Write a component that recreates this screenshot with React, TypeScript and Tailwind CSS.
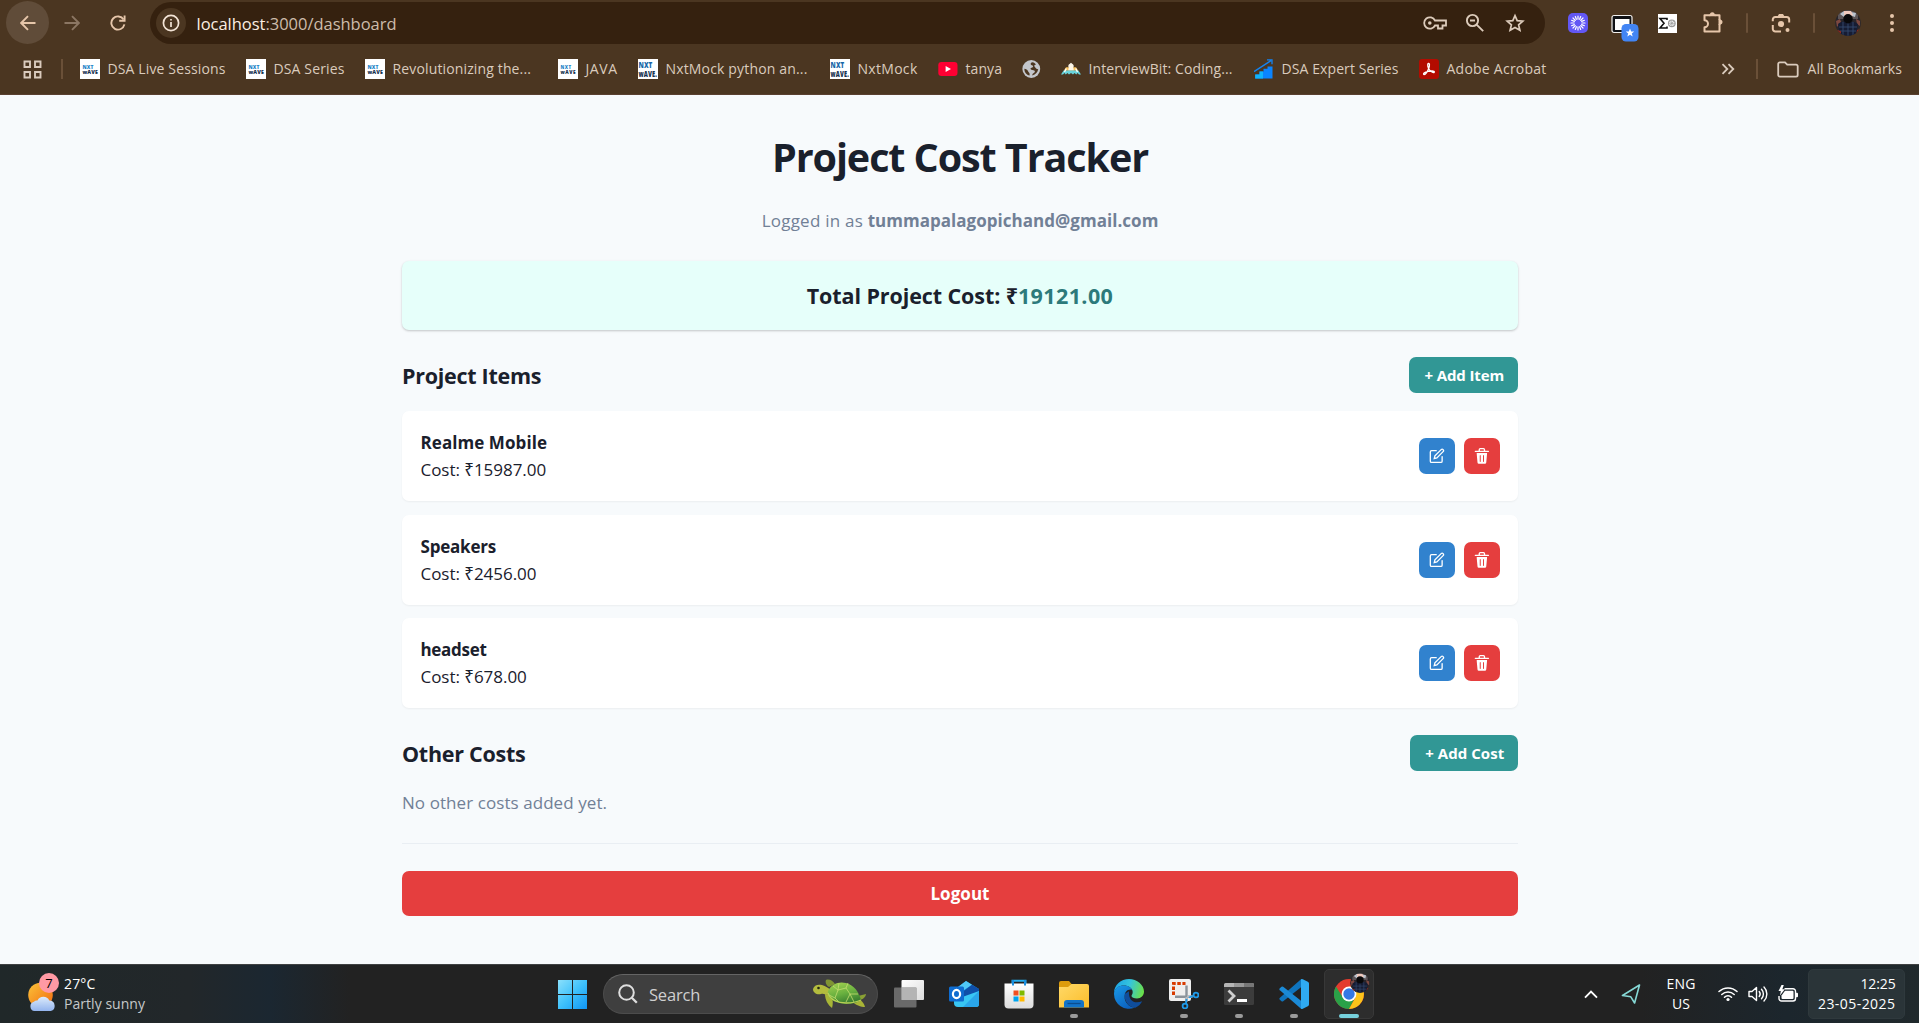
import type { ReactNode } from "react";

function BackIcon({ className }: { className: string }) {
  return (
    <svg viewBox="0 0 16 16" className={className} fill="none" stroke="currentColor" strokeWidth="1.9">
      <path d="M15.5 8H1.6M8 1.2 1.2 8 8 14.8" />
    </svg>
  );
}

function ReloadIcon() {
  return (
    <svg viewBox="0 0 16 16" className="h-4 w-4 text-[#e6c6aa]" fill="none" stroke="currentColor" strokeWidth="1.9">
      <path d="M13.6 4.6A6.6 6.6 0 1 0 14.4 9.4" />
      <path d="M14.6 0.6V5.8H9.2" />
    </svg>
  );
}

function NxtWaveIcon({ large }: { large?: boolean }) {
  return (
    <svg viewBox="0 0 20 20" className="h-5 w-5 shrink-0" fontFamily="Open Sans, sans-serif" fontWeight="800">
      <rect width="20" height="20" fill="#fff" />
      {large ? (
        <>
          <text x="0.5" y="9" fontSize="8.5" textLength="14" lengthAdjust="spacingAndGlyphs" fill="#1767a8">NXT</text>
          <text x="0.5" y="17.600" fontSize="8.5" textLength="18.500" lengthAdjust="spacingAndGlyphs" fill="#17324f">wAVE.</text>
        </>
      ) : (
        <>
          <text x="2.5" y="9.6" fontSize="5.6" textLength="11" lengthAdjust="spacingAndGlyphs" fill="#1e83c8">NXT</text>
          <text x="2.5" y="15.2" fontSize="5.6" textLength="15.5" lengthAdjust="spacingAndGlyphs" fill="#17324f">wAVE</text>
        </>
      )}
    </svg>
  );
}

function YoutubeIcon() {
  return (
    <svg viewBox="0 0 20 20" className="h-5 w-5 shrink-0">
      <rect x="0.3" y="3" width="19.2" height="14" rx="3.2" fill="#ff0033" />
      <path d="M7.6 6.9v6.2L13 10z" fill="#fff" />
    </svg>
  );
}

function GlobeIcon() {
  return (
    <svg viewBox="0 0 20 20" className="h-5 w-5 shrink-0">
      <circle cx="9.300" cy="10" r="8.900" fill="#c3c6cb" />
      <path d="M10.500 3.200c-1.500.300-2.200 1.300-1.700 2.300.500.900 1.700.700 2.200 1.500.400.800-.300 1.500-1.400 1.700-1 .200-1.300.800-.900 1.500.700 1 2.400.500 3.600 1.300 1.100.800.600 2-.500 2.600-1.200.600-1.500 1.300-1.500 2.400 3.300-.700 5.600-3.300 5.900-6.400-1.200.200-2-.200-2.500-1-.400-.900-1.200-1.200-1.400-2-.200-1 .700-1.500 1.700-1.700-.900-1.100-2-2.100-3.500-2.200z" fill="#4b3621" />
      <path d="M2.400 9.800c1.500.200 3.100.900 3.500 2.100.500 1.300 1.600 1.500 1.700 2.900v1.800C4.600 15.900 2.200 13.200 2.400 9.800z" fill="#4b3621" />
    </svg>
  );
}

function InterviewBitIcon() {
  return (
    <svg viewBox="0 0 20 20" className="h-5 w-5 shrink-0">
      <path d="M7.400 6 10 3.800 12.600 6v2H7.400z" fill="#f7f3ea" />
      <path d="M5 8.300h10l2.300 3.400H2.700z" fill="#f6c15c" />
      <path d="M8.200 5.600h3.600l1 6H7.200z" fill="#fdf6e6" />
      <path d="M2.600 11.500h14.800L20 15.500h-2l-1.400-1.500-1.400 1.500-1.600-1.500-1.600 1.500-2-1.500-2 1.500-1.600-1.500-1.600 1.500L3.400 14 2 15.500H0z" fill="#69d4dc" />
      <path d="M5.300 9.500 3.500 13M14.700 9.500l1.800 3.500" stroke="#fff" strokeWidth="1.4" />
    </svg>
  );
}

function StairsIcon() {
  return (
    <svg viewBox="0 0 20 20" className="h-5 w-5 shrink-0">
      <path d="M1.200 19.500V15.500H5.500V12.500H9.500V9.700H13.500V7.600H18.500V19.500Z" fill="#0a84ff" />
      <path d="M1.200 19.500V15.500H5.500V12.500H9V19.500Z" fill="#10b4fb" />
      <path d="M0 12.600 17 1.600M13 .8h5v4.400" stroke="#1483f0" strokeWidth="1.300" fill="none" />
    </svg>
  );
}

function AcrobatIcon() {
  return (
    <svg viewBox="0 0 20 20" className="h-5 w-5 shrink-0">
      <rect width="20" height="20" rx="3" fill="#b30b00" />
      <path
        d="M9.300 4.500c1.500-.3 1.400 2.300.5 4.800-1 2.800-3.300 6.400-4.700 6.200-1.500-.3.200-2.400 3.900-3.100 3-.6 6.300-.6 6.400.5.100 1.300-2.700.8-4.800-1.700C8.800 9 8.100 4.800 9.300 4.500z"
        fill="none"
        stroke="#fff"
        strokeWidth="1.300"
      />
    </svg>
  );
}

const bookmarks: { label: string; icon: ReactNode; slot: string; tracking: string }[] = [
  { label: "DSA Live Sessions", icon: <NxtWaveIcon />, slot: "w-[166px]", tracking: "tracking-[0.13px]" },
  { label: "DSA Series", icon: <NxtWaveIcon />, slot: "w-[119px]", tracking: "tracking-[0.13px]" },
  { label: "Revolutionizing the...", icon: <NxtWaveIcon />, slot: "w-[193px]", tracking: "tracking-[0.14px]" },
  { label: "JAVA", icon: <NxtWaveIcon />, slot: "w-[80px]", tracking: "tracking-[0.6px]" },
  { label: "NxtMock python an...", icon: <NxtWaveIcon large />, slot: "w-[192px]", tracking: "tracking-[0.16px]" },
  { label: "NxtMock", icon: <NxtWaveIcon large />, slot: "w-[108px]", tracking: "tracking-[0.3px]" },
  { label: "tanya", icon: <YoutubeIcon />, slot: "w-[84px]", tracking: "tracking-[0.07px]" },
  { label: "", icon: <GlobeIcon />, slot: "w-[39px]", tracking: "tracking-normal" },
  { label: "InterviewBit: Coding...", icon: <InterviewBitIcon />, slot: "w-[193px]", tracking: "tracking-[0.1px]" },
  { label: "DSA Expert Series", icon: <StairsIcon />, slot: "w-[165px]", tracking: "tracking-[0.09px]" },
  { label: "Adobe Acrobat", icon: <AcrobatIcon />, slot: "w-[140px]", tracking: "tracking-[0.24px]" },
];

function Avatar({ className }: { className: string }) {
  return (
    <svg viewBox="0 0 26 26" className={className}>
      <defs>
        <clipPath id="avatar-clip">
          <circle cx="13" cy="13" r="12.800" />
        </clipPath>
      </defs>
      <g clipPath="url(#avatar-clip)">
        <rect width="26" height="26" fill="#29262b" />
        <path d="M3 0h20v9H3z" fill="#5c5558" />
        <path d="M5 4l4-3 3 2-3 4zM16 2l5 1-1 4-3-1z" fill="#b9c2cc" />
        <path d="M9 1h7l2 4-3 2H9z" fill="#efc9bd" />
        <path d="M1 11l4-2 1 3-4 5zM21 9l4 2v5l-3-2z" fill="#7d4840" />
        <path d="M3 14c3-3 6-2.500 10-2.500S21 12 23 14l-2 12H5z" fill="#161c33" />
        <path d="M4 17h18M5 21h16M8 12v14M13 13v13M18 12v14" stroke="#34496d" strokeWidth="0.900" />
        <circle cx="13" cy="8.800" r="4.700" fill="#08080a" />
        <path d="M2 20l4 1v5H3zM22 20l3-1-2 6h-2z" fill="#8a2a1f" />
      </g>
    </svg>
  );
}

function Toolbar() {
  return (
    <div className="flex h-[46px] items-center text-[#e6c6aa]">
      <div className="mb-px ml-[6px] flex h-[43px] w-[43px] items-center justify-center rounded-full bg-[#604c39]">
        <BackIcon className="h-4 w-4" />
      </div>
      <div className="flex w-[46px] justify-center text-[#8b7663]">
        <BackIcon className="h-4 w-4 rotate-180" />
      </div>
      <div className="flex w-[45px] justify-center">
        <ReloadIcon />
      </div>
      <div className="ml-[10px] flex h-[42px] w-[1395px] items-center rounded-full bg-[#35210f] pr-[10px] pl-[6px] text-[#dccbbb]">
        <div className="flex h-[30px] w-[30px] items-center justify-center rounded-full bg-[#4b3621]">
          <svg viewBox="0 0 18 18" className="h-[18px] w-[18px] text-[#f3e4d6]" fill="none" stroke="currentColor" strokeWidth="1.700">
            <circle cx="9" cy="9" r="7.600" />
            <path d="M9 8v5M9 4.900v1.700" />
          </svg>
        </div>
        <div className="ml-[10.500px] pt-[3px] text-[16.5px] tracking-[-0.02px] whitespace-nowrap text-[#cdbcab]">
          <span className="text-[#fbeee2]">localhost</span>:3000/dashboard
        </div>
        <div className="ml-auto flex">
          <div className="flex w-10 items-center justify-center">
            <svg viewBox="0 0 24 14" className="h-[14px] w-6" fill="none" stroke="currentColor" strokeWidth="1.800">
              <path d="M12 4.500A5.700 5.700 0 1 0 12 9.500h3v3h4.500v-3H23v-5z" />
              <circle cx="6.800" cy="7" r="1.800" fill="currentColor" stroke="none" />
            </svg>
          </div>
          <div className="flex w-10 items-center justify-center">
            <svg viewBox="0 0 20 20" className="h-5 w-5" fill="none" stroke="currentColor" strokeWidth="1.900">
              <circle cx="7.500" cy="7.500" r="5.600" />
              <path d="M11.600 11.600l6.600 6.600M5 7.500h5" />
            </svg>
          </div>
          <div className="flex w-10 items-center justify-center">
            <svg viewBox="0 0 20 20" className="h-5 w-5" fill="none" stroke="currentColor" strokeWidth="1.700">
              <path d="M10 2.600l2.200 5.100 5.600.5-4.200 3.700 1.300 5.400-4.900-2.900-4.900 2.900 1.300-5.400L2.200 8.200l5.600-.5z" />
            </svg>
          </div>
        </div>
      </div>
      <div className="ml-[11px] flex w-[43px] justify-center">
        <svg viewBox="0 0 20 20" className="h-5 w-5">
          <rect width="20" height="20" rx="5" fill="#6257f5" />
          <g stroke="#fff" strokeWidth="1.200" strokeLinecap="round">
            <path d="M10 3v3.200M10 13.800V17M3 10h3.200M13.800 10H17M5 5l2.300 2.300M12.700 12.700L15 15M5 15l2.300-2.300M12.700 7.300L15 5M7.300 3.600l1.100 2.700M11.600 13.700l1.100 2.700M3.600 12.700l2.700-1.100M13.700 8.400l2.700-1.100M3.600 7.300l2.700 1.100M13.700 11.600l2.700 1.100M7.300 16.400l1.100-2.700M11.600 6.300l1.100-2.700" />
          </g>
        </svg>
      </div>
      <div className="flex w-[51px] justify-center">
        <svg viewBox="0 0 30 30" className="mt-[9px] h-[30px] w-[30px]">
          <rect x="2" y="2.500" width="20" height="17" rx="2" fill="#101216" stroke="#f2f0ee" strokeWidth="1.200" />
          <rect x="5" y="6" width="14.500" height="11" fill="#fff" />
          <rect x="11.500" y="11" width="17" height="17.500" rx="4.500" fill="#4285f4" />
          <path d="M20 15.500l1.200 3h3l-2.400 1.900.9 3.100-2.700-1.800-2.700 1.800.9-3.100-2.400-1.900h3z" fill="#fff" />
        </svg>
      </div>
      <div className="flex w-[35px] justify-center">
        <svg viewBox="0 0 19 19" className="h-[19px] w-[19px]">
          <rect width="19" height="19" fill="#fff" />
          <path d="M9 6V4.500H2L6 9.300 2 14h7v-1.500" fill="none" stroke="#111" strokeWidth="1.600" />
          <circle cx="13.800" cy="9.300" r="3.300" fill="none" stroke="#9a9a9a" strokeWidth="1.200" />
          <path d="M13.800 6v6.600M10.500 9.300h6.600M11.500 7l4.600 4.600M11.500 11.600L16.100 7" stroke="#9a9a9a" strokeWidth="0.700" />
        </svg>
      </div>
      <div className="ml-[5px] flex w-[46px] justify-center">
        <svg viewBox="0 0 24 24" className="mb-0.5 h-6 w-6" fill="none" stroke="currentColor" strokeWidth="2">
          <path d="M4.500 5.200H9.200M13.800 5.200H18.500V9.800M18.500 14.200V21.500H3.500V17.200A3.400 3.400 0 0 0 3.500 10.200V5.200H5" strokeLinejoin="round" />
          <path d="M8.800 5.200a2.500 3 0 0 1 5 0zM18.500 9.600a3 2.500 0 0 1 0 5z" fill="currentColor" stroke="none" />
          <path d="M8.500 5.200h6M18.500 9v6" />
        </svg>
      </div>
      <div className="flex w-[21px] justify-center">
        <div className="h-5 w-[2px] rounded bg-[#6a5038]" />
      </div>
      <div className="flex w-[47px] justify-center">
        <svg viewBox="0 0 20 20" className="h-5 w-5" fill="none" stroke="currentColor" strokeWidth="2">
          <path d="M1.800 8.300V6.500a2.500 2.500 0 0 1 2.500-2.500h11.400a2.500 2.500 0 0 1 2.500 2.500v3M1.800 12v4a2.500 2.500 0 0 0 2.500 2.500H10" />
          <path d="M6.500 3.500L8 1h4l1.500 2.500z" fill="currentColor" stroke="none" />
          <circle cx="10" cy="11" r="3.100" fill="currentColor" stroke="none" />
          <circle cx="16.500" cy="17" r="2" fill="currentColor" stroke="none" />
        </svg>
      </div>
      <div className="flex w-5 justify-center">
        <div className="h-5 w-[2px] rounded bg-[#6a5038]" />
      </div>
      <div className="flex w-[47px] justify-center">
        <Avatar className="h-[26px] w-[26px]" />
      </div>
      <div className="flex w-[42px] flex-col items-center gap-[3.5px]">
        <div className="h-[3.5px] w-[3.5px] rounded-full bg-current" />
        <div className="h-[3.5px] w-[3.5px] rounded-full bg-current" />
        <div className="h-[3.5px] w-[3.5px] rounded-full bg-current" />
      </div>
    </div>
  );
}

function BookmarksBar() {
  return (
    <div className="flex h-[46px] items-center text-[14px] whitespace-nowrap text-[#dacbbd]">
      <svg viewBox="0 0 19 19" className="ml-[22.500px] h-[19px] w-[19px]" fill="none" stroke="currentColor" strokeWidth="1.900">
        <path d="M1.500 1.500h5.500v5.500H1.500zM12 1.500h5.500v5.500H12zM1.500 12h5.500v5.500H1.500zM12 12h5.500v5.500H12z" />
      </svg>
      <div className="ml-[19px] h-5 w-[2px] bg-[#6a5038]" />
      <div className="ml-[17.500px] flex">
        {bookmarks.map((b, i) => (
          <div key={i} className={`flex items-center gap-[7.500px] ${b.slot} ${b.tracking}`}>
            {b.icon}
            {b.label && <span className="leading-5">{b.label}</span>}
          </div>
        ))}
      </div>
      <svg viewBox="0 0 14 12" className="ml-auto h-3 w-[14px]" fill="none" stroke="currentColor" strokeWidth="1.800">
        <path d="M1.500 1.200L6.300 6l-4.800 4.800M7.500 1.200L12.300 6l-4.800 4.800" />
      </svg>
      <div className="ml-[21px] h-5 w-[2px] bg-[#6a5038]" />
      <svg viewBox="0 0 22 17" className="ml-[19px] h-[17px] w-[22px]" fill="none" stroke="currentColor" strokeWidth="1.800">
        <path d="M1.200 3A1.600 1.600 0 0 1 2.800 1.400H8l2.200 2.300h8.900A1.600 1.600 0 0 1 20.700 5.300V14a1.600 1.600 0 0 1-1.600 1.600H2.800A1.600 1.600 0 0 1 1.200 14z" />
      </svg>
      <span className="mr-[17px] ml-[8.500px] leading-5 tracking-[0.09px]">All Bookmarks</span>
    </div>
  );
}

function EditIcon() {
  return (
    <svg viewBox="0 0 24 24" className="h-[15.75px] w-[15.75px]" fill="none" stroke="currentColor" strokeWidth="2" strokeLinecap="round">
      <path d="M11 4H4a2 2 0 00-2 2v14a2 2 0 002 2h14a2 2 0 002-2v-7" />
      <path d="M18.500 2.500a2.121 2.121 0 013 3L12 15l-4 1 1-4 9.500-9.500z" />
    </svg>
  );
}

function DeleteIcon() {
  return (
    <svg viewBox="0 0 24 24" className="h-[15.75px] w-[15.75px]" fill="currentColor">
      <path d="M19.452 7.500H4.547a.5.5 0 00-.5.545l1.287 14.136A2 2 0 007.326 24h9.347a2 2 0 001.992-1.819L19.950 8.045a.5.5 0 00-.129-.382.5.5 0 00-.369-.163zm-9.200 13a.75.75 0 01-1.500 0v-9a.75.75 0 011.500 0zm5 0a.75.75 0 01-1.500 0v-9a.75.75 0 011.500 0zM22 4h-4.750a.25.25 0 01-.25-.25V2.500A2.500 2.500 0 0014.500 0h-5A2.500 2.500 0 007 2.500v1.250a.25.25 0 01-.25.25H2a1 1 0 000 2h20a1 1 0 000-2zM9 3.750V2.500a.5.5 0 01.5-.5h5a.5.5 0 01.5.5v1.250a.25.25 0 01-.25.25h-5.500A.25.25 0 019 3.750z" />
    </svg>
  );
}

const items = [
  { name: "Realme Mobile", cost: "15987.00", tracking: "tracking-[0.07px]" },
  { name: "Speakers", cost: "2456.00", tracking: "tracking-[-0.21px]" },
  { name: "headset", cost: "678.00", tracking: "tracking-[-0.3px]" },
];

function Dashboard() {
  return (
    <main className="flex-1 bg-[#f7fafc] pl-px text-[#1a202c]">
      <div className="mx-auto flex w-[1116px] flex-col gap-[27px] pt-9 text-[17px] leading-[27px]">
        <h1 className="-mb-[1.500px] pt-[1.500px] text-center text-[39.500px] leading-[48.600px] font-bold tracking-[-1.08px]">
          Project Cost Tracker
        </h1>
        <p className="text-center tracking-[0.23px] text-[#718096]">
          Logged in as <b className="font-bold tracking-[0.03px]">tummapalagopichand@gmail.com</b>
        </p>
        <div className="rounded-[7px] bg-[#e6fffa] p-[18px] text-center text-[21.500px] leading-[33.750px] font-bold tracking-[-0.09px] shadow-[0_1px_3px_rgba(0,0,0,0.1),0_1px_2px_rgba(0,0,0,0.12)]">
          Total Project Cost: ₹<span className="tracking-[0.4px] text-[#2c7a7b]">19121.00</span>
        </div>
        <section>
          <div className="mb-[18px] flex h-9 items-center justify-between">
            <h2 className="text-[21.500px] font-bold tracking-[-0.28px]">Project Items</h2>
            <button className="h-9 w-[109px] rounded-[7px] bg-[#319795] pl-[1.500px] text-[15px] font-bold tracking-[-0.12px] text-white">
              + Add Item
            </button>
          </div>
          <div className="flex flex-col gap-[13.500px]">
            {items.map((item) => (
              <div
                key={item.name}
                className="flex items-center justify-between rounded-[7px] bg-white p-[18px] shadow-[0_1px_2px_rgba(0,0,0,0.05)]"
              >
                <div className="pl-[0.500px]">
                  <p className={`font-bold ${item.tracking}`}>{item.name}</p>
                  <p className="tracking-[-0.04px]">Cost: ₹{item.cost}</p>
                </div>
                <div className="flex gap-[9px] text-white">
                  <button className="flex h-9 w-9 items-center justify-center rounded-[7px] bg-[#3182ce]">
                    <EditIcon />
                  </button>
                  <button className="flex h-9 w-9 items-center justify-center rounded-[7px] bg-[#e53e3e]">
                    <DeleteIcon />
                  </button>
                </div>
              </div>
            ))}
          </div>
        </section>
        <section>
          <div className="mb-[18px] flex h-9 items-center justify-between">
            <h2 className="text-[21.500px] font-bold tracking-[-0.27px]">Other Costs</h2>
            <button className="h-9 w-[108px] rounded-[7px] bg-[#319795] pl-[1.500px] text-[15px] font-bold tracking-[0.05px] text-white">
              + Add Cost
            </button>
          </div>
          <p className="tracking-[0.07px] text-[#718096]">No other costs added yet.</p>
        </section>
        <hr className="border-t border-[#e9eef3]" />
        <button className="h-[45px] rounded-[7px] bg-[#e53e3e] font-bold tracking-[0.05px] text-white">Logout</button>
      </div>
    </main>
  );
}

function WeatherIcon() {
  return (
    <div className="relative h-9 w-8">
      <svg viewBox="0 0 32 36" className="h-9 w-8">
        <defs>
          <linearGradient id="sun" x1="0" y1="0" x2="1" y2="1">
            <stop offset="0" stopColor="#fbc33a" />
            <stop offset="1" stopColor="#f26a0f" />
          </linearGradient>
          <linearGradient id="cloud" x1="0" y1="0" x2="0" y2="1">
            <stop offset="0" stopColor="#dcebfb" />
            <stop offset="1" stopColor="#93b4ee" />
          </linearGradient>
        </defs>
        <circle cx="12.500" cy="19" r="12.300" fill="url(#sun)" />
        <path d="M6.500 35a4.700 4.700 0 0 1-.6-9.200 4.600 4.600 0 0 1 3.600-1.200 6.500 6.500 0 0 1 11.800 0 5.300 5.300 0 0 1 1.500 10.400z" fill="url(#cloud)" />
      </svg>
      <div className="absolute -top-[3px] left-[11px] flex h-5 w-5 items-center justify-center rounded-full bg-[#ff99a4] text-[13px] leading-5 text-black">
        7
      </div>
    </div>
  );
}

function TurtleIcon() {
  return (
    <svg viewBox="0 0 54 30" className="h-[30px] w-[54px]">
      <defs>
        <linearGradient id="shell" x1="0" y1="0" x2="0.400" y2="1">
          <stop offset="0" stopColor="#a9d452" />
          <stop offset="0.600" stopColor="#68b03f" />
          <stop offset="1" stopColor="#3c8030" />
        </linearGradient>
      </defs>
      <path d="M13 1c3-1.500 7 1 9 4l-6 3c-3-2-4-5-3-7z" fill="#7f9433" />
      <path d="M43 19c5 1 8 5 9 9-4 0-10-2-13-6z" fill="#a9b436" />
      <path d="M45 17l8-2c0 3-4 6-7 6z" fill="#8aa034" />
      <path d="M12 15c0 6 3 11 7 14 1-3 1-8 0-12z" fill="#a8b637" />
      <path d="M0 10c1-4 5-5 9-4 4 1 6 3 9 5l-2 5c-4 0-5-2-8-1-4 1-8-1-8-5z" fill="#b3bc3e" />
      <circle cx="5.500" cy="9" r="1.300" fill="#262a12" />
      <path d="M15 12C18 5 26 2 33 4c8 2 13 9 15 17-6 5-17 5-25 2-5-2-9-6-8-11z" fill="url(#shell)" />
      <path d="M20 7l5 4-3 8 4 4M25 11l8-2 4 6-4 8M33 9l2-5M37 15l8 0M25 11l1-7M22 19l-6-3M37 15l4 8" fill="none" stroke="#c5de70" strokeWidth="0.800" />
      <path d="M15 14c2 7 10 10 18 10 6 0 11-1 15-3" fill="none" stroke="#b9cf55" strokeWidth="1.300" />
    </svg>
  );
}

function TaskViewIcon() {
  return (
    <svg viewBox="0 0 30 30" className="h-[30px] w-[30px]">
      <defs>
        <linearGradient id="tv" x1="0" y1="0" x2="1" y2="1">
          <stop offset="0" stopColor="#fff" />
          <stop offset="1" stopColor="#dcdcdc" />
        </linearGradient>
      </defs>
      <rect x="7.500" y="1" width="22.500" height="20" rx="1" fill="url(#tv)" />
      <rect x="0" y="8.500" width="22.500" height="20" rx="1" fill="#777" fillOpacity="0.850" />
      <path d="M7.500 8.500h15V21h-15z" fill="#b4b4b4" />
    </svg>
  );
}

function OutlookIcon() {
  return (
    <svg viewBox="0 0 30 30" className="h-[30px] w-[30px]">
      <path d="M5 11 17 2l13 8v5L13 22H5z" fill="#1490df" />
      <path d="M9 8 17 2l6 3.700L9 15z" fill="#50c8f5" />
      <path d="M23 5.700 30 10v3L12 24V14z" fill="#0f4fa8" />
      <path d="M5 24v-3l25-9v13a3 3 0 0 1-3 3H9a4 4 0 0 1-4-4z" fill="#38c6f4" />
      <path d="M30 12v13a3 3 0 0 1-3 3H14z" fill="#2aa6ea" />
      <rect x="0" y="7.500" width="15" height="15" rx="1.500" fill="#0f6cd0" />
      <ellipse cx="7.500" cy="15" rx="3.600" ry="4.100" fill="none" stroke="#fff" strokeWidth="2.200" />
    </svg>
  );
}

function StoreIcon() {
  return (
    <svg viewBox="0 0 30 30" className="h-[30px] w-[30px]">
      <defs>
        <linearGradient id="store" x1="0" y1="0" x2="0" y2="1">
          <stop offset="0" stopColor="#fff" />
          <stop offset="1" stopColor="#dcdcdc" />
        </linearGradient>
      </defs>
      <path d="M8.500 6V1.800h13V6" fill="none" stroke="#27b0f0" strokeWidth="2" />
      <path d="M.5 4.500h29v21a4 4 0 0 1-4 4h-21a4 4 0 0 1-4-4z" fill="url(#store)" />
      <path d="M8 1h2v5.500H8zM20 1h2v5.500h-2z" fill="#1a8fe0" />
      <path d="M9.500 11.500h5v5h-5z" fill="#f25022" />
      <path d="M15.500 11.500h5v5h-5z" fill="#7fba00" />
      <path d="M9.500 17.500h5v5h-5z" fill="#00a4ef" />
      <path d="M15.500 17.500h5v5h-5z" fill="#ffb900" />
    </svg>
  );
}

function ExplorerIcon() {
  return (
    <svg viewBox="0 0 30 30" className="h-[30px] w-[30px]">
      <defs>
        <linearGradient id="folder" x1="0" y1="0" x2="1" y2="1">
          <stop offset="0" stopColor="#ffd968" />
          <stop offset="1" stopColor="#fbbd2a" />
        </linearGradient>
      </defs>
      <path d="M0 4a2 2 0 0 1 2-2h8l3 3.500L10 9H0z" fill="#dd9c0c" />
      <path d="M0 8h9l3.500-3H28a2 2 0 0 1 2 2v21.500H0z" fill="url(#folder)" />
      <path d="M5 28.500V24a3 3 0 0 1 3-3h14a3 3 0 0 1 3 3v4.500z" fill="#1273c8" />
      <path d="M8.500 24.500h13" stroke="#0b4d8e" strokeWidth="1.300" />
    </svg>
  );
}

function EdgeIcon() {
  return (
    <svg viewBox="0 0 30 30" className="h-[30px] w-[30px]">
      <defs>
        <linearGradient id="edgeTop" x1="0" y1="0.300" x2="1" y2="0.500">
          <stop offset="0" stopColor="#1ba4e6" />
          <stop offset="0.500" stopColor="#35c4dc" />
          <stop offset="1" stopColor="#6be04a" />
        </linearGradient>
        <linearGradient id="edgeSide" x1="0" y1="0" x2="0.600" y2="1">
          <stop offset="0" stopColor="#1a9be8" />
          <stop offset="1" stopColor="#0c62c0" />
        </linearGradient>
      </defs>
      <path d="M10.500 15c-.5 8 5 13.500 10.800 13.700 3-1.300 5.400-3.500 6.900-6.500-7 3-14 .3-13.200-9.900z" fill="#0f4d9c" />
      <path d="M0 14C0 6 7 0 15 0s15 6 15 12.500c0 4-3 7-7 7-3 0-5.500-1-5.500-2.500 0-1 1.200-1.500 1.200-4C18.700 9 14 6.500 10 6.500 5 6.500 1 9 0 14z" fill="url(#edgeTop)" />
      <path d="M0 15C0 9 5 6.500 10 6.500c4 0 7 2 8.300 4.500-4-1.500-7.800 1.500-7.800 6.500 0 6 4.500 10.500 10 11.300A15 15 0 0 1 0 15z" fill="url(#edgeSide)" />
    </svg>
  );
}

function SnippingIcon() {
  return (
    <svg viewBox="0 0 30 30" className="h-[30px] w-[30px]">
      <rect x="0" y="0" width="22" height="22" rx="2" fill="#efefef" />
      <path d="M4.500 16V4.500H16.500" fill="none" stroke="#d83b01" strokeWidth="3" strokeDasharray="3.500 1.600" />
      <path d="M17.500 6.500V22M6 17.700h17" stroke="#8b939b" strokeWidth="2.400" />
      <path d="M17.500 18v5M18 17.500h6" stroke="#b6bcc2" strokeWidth="2" />
      <circle cx="27" cy="16" r="2.400" fill="none" stroke="#1f9ae8" strokeWidth="1.800" />
      <circle cx="16" cy="27" r="2.400" fill="none" stroke="#1f9ae8" strokeWidth="1.800" />
      <path d="M20 18.500l5-1.800M17.500 20l-.6 5" stroke="#1f9ae8" strokeWidth="1.800" />
    </svg>
  );
}

function TerminalIcon() {
  return (
    <svg viewBox="0 0 30 30" className="h-[30px] w-[30px]">
      <path d="M0 5.500A1.500 1.500 0 0 1 1.500 4h27A1.500 1.500 0 0 1 30 5.500V8H0z" fill="#b5b5b5" />
      <path d="M10 4h10v4H10z" fill="#989898" />
      <path d="M20 4h8.500A1.500 1.500 0 0 1 30 5.500V8H20z" fill="#777" />
      <path d="M0 8h30v16.500a1.500 1.500 0 0 1-1.500 1.500h-27A1.500 1.500 0 0 1 0 24.500z" fill="#3c3c3c" />
      <path d="M4.500 11.500 10 17l-5.500 5.500" fill="none" stroke="#cfcfcf" strokeWidth="2.800" />
      <path d="M13 20h10v3H13z" fill="#fff" />
    </svg>
  );
}

function CodeIcon() {
  return (
    <svg viewBox="0 0 30 30" className="h-[30px] w-[30px]">
      <path d="M1.200 18.500 22 .3v8L4.200 22.300a1.400 1.400 0 0 1-1.700 0L.8 20.800a1.400 1.400 0 0 1 .4-2.300z" fill="#0f74bd" />
      <path d="M1.200 11.500 22 29.700v-8L4.200 7.700a1.400 1.400 0 0 0-1.700 0L.8 9.200a1.400 1.400 0 0 0 .4 2.300z" fill="#1b8ad6" />
      <path d="M22 .3a2 2 0 0 1 1.800 0l5 2.400A2 2 0 0 1 30 4.500v21a2 2 0 0 1-1.200 1.800l-5 2.400a2 2 0 0 1-1.800 0z" fill="#2fabf3" />
    </svg>
  );
}

function ChromeIcon() {
  return (
    <div className="relative h-[30px] w-[30px]">
      <svg viewBox="0 0 30 30" className="h-[30px] w-[30px]">
        <circle cx="15" cy="15" r="15" fill="#e33b2e" />
        <path d="M2 7.500A15 15 0 0 0 15 30l6.200-11.500L8.900 18.500z" fill="#2aa148" />
        <path d="M15 30A15 15 0 0 0 28 7.600H15L21.500 18.600z" fill="#fcc41a" />
        <circle cx="15" cy="15" r="7.400" fill="#fff" />
        <circle cx="15" cy="15" r="5.700" fill="#3479e6" />
      </svg>
      <Avatar className="absolute -top-[6px] left-[15.500px] h-5 w-5" />
    </div>
  );
}

const apps: { icon: ReactNode; state: "idle" | "open" | "active" }[] = [
  { icon: <TaskViewIcon />, state: "idle" },
  { icon: <OutlookIcon />, state: "idle" },
  { icon: <StoreIcon />, state: "idle" },
  { icon: <ExplorerIcon />, state: "open" },
  { icon: <EdgeIcon />, state: "idle" },
  { icon: <SnippingIcon />, state: "open" },
  { icon: <TerminalIcon />, state: "open" },
  { icon: <CodeIcon />, state: "open" },
  { icon: <ChromeIcon />, state: "active" },
];

function Taskbar() {
  return (
    <footer className="flex h-[59px] items-center border-t border-[#3f4142] bg-[linear-gradient(90deg,#202829_0px,#22272a_190px,#1b2731_270px,#222222_350px,#222222_1640px,#1c262d_1785px,#20292c_1919px)] text-[14px] text-white">
      <div className="flex w-[545px] items-center pl-7">
        <WeatherIcon />
        <div className="ml-[4px] leading-5">
          <p className="tracking-[0.17px]">27°C</p>
          <p className="tracking-[0.04px] text-[#c6c8c9]">Partly sunny</p>
        </div>
      </div>
      <div className="flex w-[55px] justify-center">
        <svg viewBox="0 0 29 29" className="h-[29px] w-[29px]">
          <defs>
            <linearGradient id="win" x1="0" y1="0" x2="1" y2="1">
              <stop offset="0" stopColor="#8be0fb" />
              <stop offset="0.500" stopColor="#3fc1fb" />
              <stop offset="1" stopColor="#0f95f5" />
            </linearGradient>
          </defs>
          <path d="M0 0h14v14H0zM15 0h14v14H15zM0 15h14v14H0zM15 15h14v14H15z" fill="url(#win)" />
        </svg>
      </div>
      <div className="ml-[3px] flex h-10 w-[275px] items-center rounded-full border border-[#4c4c4c] border-t-[#656565] bg-[#3f3f3f] pr-[10px] pl-[14px]">
        <svg viewBox="0 0 20 20" className="h-5 w-5" fill="none" stroke="#dedede" strokeWidth="2">
          <circle cx="8.500" cy="8.500" r="7.300" />
          <path d="M13.800 13.800l5 5" strokeWidth="2.300" />
        </svg>
        <span className="ml-[11px] pt-[2px] text-[16.500px] tracking-[-0.2px] text-[#cfcfcf]">Search</span>
        <div className="ml-auto">
          <TurtleIcon />
        </div>
      </div>
      <div className="ml-[3.500px] flex">
        {apps.map((app, i) => (
          <div key={i} className="flex w-[55px] justify-center">
            <div
              className={
                app.state === "active"
                  ? "relative flex h-[50px] w-[50px] items-center justify-center rounded-[5px] border border-[#383838] bg-[#2d2d2d]"
                  : "relative flex h-[50px] w-[50px] items-center justify-center"
              }
            >
              {app.icon}
              {app.state === "open" && <div className="absolute bottom-[1px] h-1 w-2 rounded-full bg-[#9a9a9a]" />}
              {app.state === "active" && <div className="absolute bottom-0 h-1 w-5 rounded-full bg-[#76d0dc]" />}
            </div>
          </div>
        ))}
      </div>
      <div className="mr-[14px] ml-auto flex items-center">
        <svg viewBox="0 0 14 9" className="h-[9px] w-[14px]" fill="none" stroke="#fff" strokeWidth="1.900">
          <path d="M1 7.700l6-6 6 6" />
        </svg>
        <svg viewBox="0 0 20 20" className="ml-[23px] h-5 w-5" fill="none" stroke="#86d9d6" strokeWidth="1.600" strokeLinejoin="round">
          <path d="M18.500 1L1.500 11.500l8.300 1.300 3.800 6.200z" />
        </svg>
        <div className="ml-[20px] w-[40px] text-center leading-5 tracking-[0.17px]">
          <p>ENG</p>
          <p>US</p>
        </div>
        <svg viewBox="0 0 20 16" className="ml-[17px] h-4 w-5" fill="none" stroke="#fff" strokeWidth="1.500" strokeLinecap="round">
          <path d="M1 5.500a13 13 0 0 1 18 0M3.800 8.500a9 9 0 0 1 12.400 0M6.500 11.300a5 5 0 0 1 7 0" />
          <circle cx="10" cy="13.500" r="1.600" fill="#fff" stroke="none" />
        </svg>
        <svg viewBox="0 0 20 18" className="ml-[10px] h-[18px] w-5" fill="none" stroke="#fff" strokeWidth="1.400" strokeLinecap="round" strokeLinejoin="round">
          <path d="M1 6.500h3L8.500 2.500v13L4 11.500H1z" />
          <path d="M11.200 6.500a4 4 0 0 1 0 5M13.500 4.200a7 7 0 0 1 0 9.600M16 2a10 10 0 0 1 0 14" />
        </svg>
        <svg viewBox="0 0 20 18" className="ml-[10px] h-[18px] w-5">
          <path d="M6.500 3.800H15A2.500 2.500 0 0 1 17.500 6.300v7.200A2.500 2.500 0 0 1 15 16H3.500A2.500 2.500 0 0 1 1 13.500V11" fill="none" stroke="#fff" strokeWidth="1.400" />
          <path d="M7 5.800h7.500a1 1 0 0 1 1 1V13a1 1 0 0 1-1 1h-10a1 1 0 0 1-1-1v-2.500z" fill="#fff" />
          <path d="M18 7.800h1a1 1 0 0 1 1 1v2.400a1 1 0 0 1-1 1h-1z" fill="#fff" />
          <path d="M3.500 0 .5 6h2.300L2 10.500 6.800 4.300H4.300L5.800 0z" fill="#fff" />
        </svg>
        <div className="ml-[10px] flex h-[50px] w-[97px] flex-col justify-center rounded-[5px] border border-[#2f393d] bg-[#2a3438] pr-[8.500px] text-right leading-5">
          <p className="tracking-[-0.14px]">12:25</p>
          <p className="tracking-[0.45px]">23-05-2025</p>
        </div>
      </div>
    </footer>
  );
}

export default function App() {
  return (
    <div className="flex h-[1023px] w-[1919px] flex-col overflow-hidden font-['Open_Sans','Noto_Sans',sans-serif]">
      <header className="h-[95px] shrink-0 border-b border-[#5a4030] bg-[#4b3621]">
        <Toolbar />
        <BookmarksBar />
      </header>
      <Dashboard />
      <Taskbar />
    </div>
  );
}
